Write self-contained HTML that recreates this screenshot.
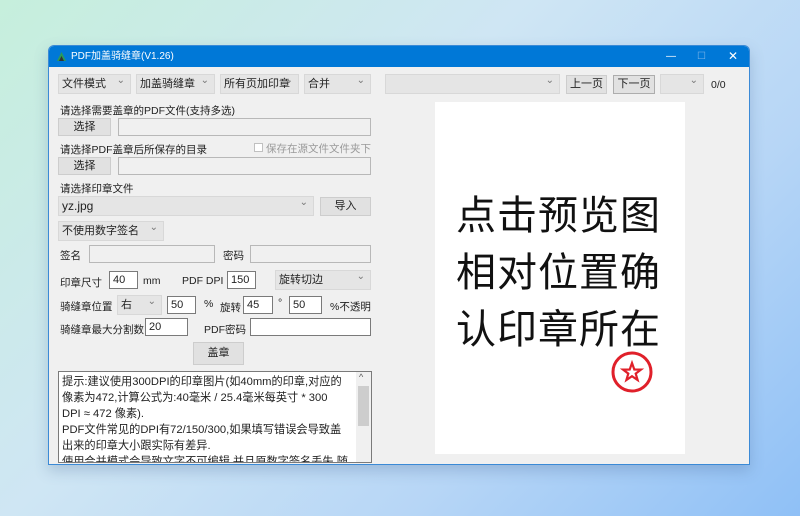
<!DOCTYPE html><html><head><meta charset="utf-8"><style>
*{margin:0;padding:0;box-sizing:border-box}
body{width:800px;height:516px;overflow:hidden;position:relative;font-family:"Liberation Sans","Noto Sans CJK SC",sans-serif;font-size:11px;color:#222;
background:linear-gradient(135deg,#c6efdc 0%,#cfe6f4 40%,#b7d6f6 70%,#8fc0f6 100%)}
.win{position:absolute;left:48px;top:45px;width:702px;height:420px;background:#f0f0f0;border:1px solid #3b8ad6;box-shadow:0 6px 14px rgba(60,90,140,.25);border-radius:6px 6px 0 0;overflow:hidden}
.tb{position:absolute;left:0;top:0;width:100%;height:21px;background:#0078d7;color:#fff;font-size:10px;line-height:21px;padding-left:22px}
.a{position:absolute}
.cb{position:absolute;height:20px;background:#e5e5e5;border:1px solid #d8d8d8;padding-left:3px;line-height:18px;font-size:11px}
.cb:after{content:"⌄";position:absolute;right:5px;top:-3px;color:#777;font-size:10px}
.bt{position:absolute;background:#e1e1e1;border:1px solid #cdcdcd;text-align:center;font-size:11px}
.tx{position:absolute;background:#fff;border:1px solid #7a7a7a;height:18px;line-height:16px;padding-left:3px;font-size:11px}
.tg{position:absolute;background:#f0f0f0;border:1px solid #b8b8b8;height:18px}
.l{position:absolute;font-size:10.5px;white-space:nowrap}
</style></head><body>
<div class="win">
<div class="tb">PDF加盖骑缝章(V1.26)
<svg class="a" style="left:7px;top:5px" width="11" height="11"><path d="M1 10 L5.5 1 L10 10 Z" fill="#2a9a5a"/><path d="M3 10 L5.5 5 L8 10Z" fill="#333"/></svg>
<span class="a" style="left:617px;top:0">—</span><span class="a" style="left:648px;top:0;color:#7fb6e8">☐</span><span class="a" style="left:679px;top:0;font-size:12px">✕</span></div>
</div>
<div class="cb" style="left:58px;top:74px;width:73px">文件模式</div>
<div class="cb" style="left:136px;top:74px;width:79px">加盖骑缝章</div>
<div class="cb" style="left:220px;top:74px;width:79px">所有页加印章</div>
<div class="cb" style="left:304px;top:74px;width:67px">合并</div>
<div class="cb" style="left:385px;top:74px;width:175px"></div>
<div class="bt" style="left:566px;top:75px;width:41px;height:19px;line-height:17px">上一页</div>
<div class="bt" style="left:613px;top:75px;width:42px;height:19px;line-height:17px;border-color:#adadad">下一页</div>
<div class="cb" style="left:660px;top:74px;width:44px"></div>
<div class="l" style="left:711px;top:79px">0/0</div>
<div class="l" style="left:60px;top:103px">请选择需要盖章的PDF文件(支持多选)</div>
<div class="bt" style="left:58px;top:118px;width:53px;height:18px;line-height:16px">选择</div>
<div class="tg" style="left:118px;top:118px;width:253px"></div>
<div class="l" style="left:60px;top:142px">请选择PDF盖章后所保存的目录</div>
<div class="a" style="left:254px;top:143px;width:9px;height:9px;border:1px solid #c0c0c0;background:#fff"></div>
<div class="l" style="left:266px;top:141px;color:#9a9a9a">保存在源文件文件夹下</div>
<div class="bt" style="left:58px;top:157px;width:53px;height:18px;line-height:16px">选择</div>
<div class="tg" style="left:118px;top:157px;width:253px"></div>
<div class="l" style="left:60px;top:181px">请选择印章文件</div>
<div class="cb" style="left:58px;top:196px;width:256px;font-size:12px">yz.jpg</div>
<div class="bt" style="left:320px;top:197px;width:51px;height:19px;line-height:17px">导入</div>
<div class="cb" style="left:58px;top:221px;width:106px">不使用数字签名</div>
<div class="l" style="left:60px;top:248px">签名</div>
<div class="tg" style="left:89px;top:245px;width:126px"></div>
<div class="l" style="left:223px;top:248px">密码</div>
<div class="tg" style="left:250px;top:245px;width:121px"></div>
<div class="l" style="left:60px;top:275px">印章尺寸</div>
<div class="tx" style="left:109px;top:271px;width:29px">40</div>
<div class="l" style="left:143px;top:275px">mm</div>
<div class="l" style="left:182px;top:275px">PDF DPI</div>
<div class="tx" style="left:227px;top:271px;width:29px">150</div>
<div class="cb" style="left:275px;top:270px;width:96px">旋转切边</div>
<div class="l" style="left:60px;top:299px">骑缝章位置</div>
<div class="cb" style="left:117px;top:295px;width:45px">右</div>
<div class="tx" style="left:167px;top:296px;width:29px">50</div>
<div class="l" style="left:204px;top:298px">%</div>
<div class="l" style="left:220px;top:300px">旋转</div>
<div class="tx" style="left:243px;top:296px;width:30px">45</div>
<div class="l" style="left:278px;top:297px">°</div>
<div class="tx" style="left:289px;top:296px;width:33px">50</div>
<div class="l" style="left:330px;top:299px">%不透明</div>
<div class="l" style="left:60px;top:322px">骑缝章最大分割数</div>
<div class="tx" style="left:145px;top:318px;width:43px">20</div>
<div class="l" style="left:204px;top:322px">PDF密码</div>
<div class="tx" style="left:250px;top:318px;width:121px"></div>
<div class="bt" style="left:193px;top:342px;width:51px;height:23px;line-height:21px">盖章</div>
<div class="a" style="left:58px;top:371px;width:314px;height:92px;background:#fff;border:1px solid #7a7a7a;overflow:hidden;padding:2px 22px 0 3px;font-size:11.2px;line-height:16px">提示:建议使用300DPI的印章图片(如40mm的印章,对应的像素为472,计算公式为:40毫米 / 25.4毫米每英寸 * 300 DPI ≈ 472 像素).<br>PDF文件常见的DPI有72/150/300,如果填写错误会导致盖出来的印章大小跟实际有差异.<br>使用合并模式会导致文字不可编辑,并且原数字签名丢失.随意骑缝章和自定义加印章共用右边的预览定位,所以同时使用的时候会冲突,建议分开使用</div>
<div class="a" style="left:356px;top:372px;width:15px;height:90px;background:#f0f0f0"></div>
<div class="a" style="left:358px;top:386px;width:11px;height:40px;background:#cdcdcd"></div>
<div class="l" style="left:359px;top:372px;font-size:9px;color:#555">^</div>
<div class="a" style="left:435px;top:102px;width:250px;height:352px;background:#fff"></div>
<div class="a" style="left:456px;top:184px;font-family:'Noto Sans CJK SC',sans-serif;font-size:40px;line-height:57px;letter-spacing:1px;color:#111">点击预览图<br>相对位置确<br>认印章所在</div>
<svg class="a" style="left:610px;top:350px" width="44" height="44"><circle cx="22" cy="22" r="19" fill="none" stroke="#e0202a" stroke-width="3"/><path d="M22 13 L24.3 19.5 L31 19.6 L25.7 23.6 L27.6 30 L22 26.2 L16.4 30 L18.3 23.6 L13 19.6 L19.7 19.5Z" fill="none" stroke="#e0202a" stroke-width="2.2"/></svg>
</body></html>
